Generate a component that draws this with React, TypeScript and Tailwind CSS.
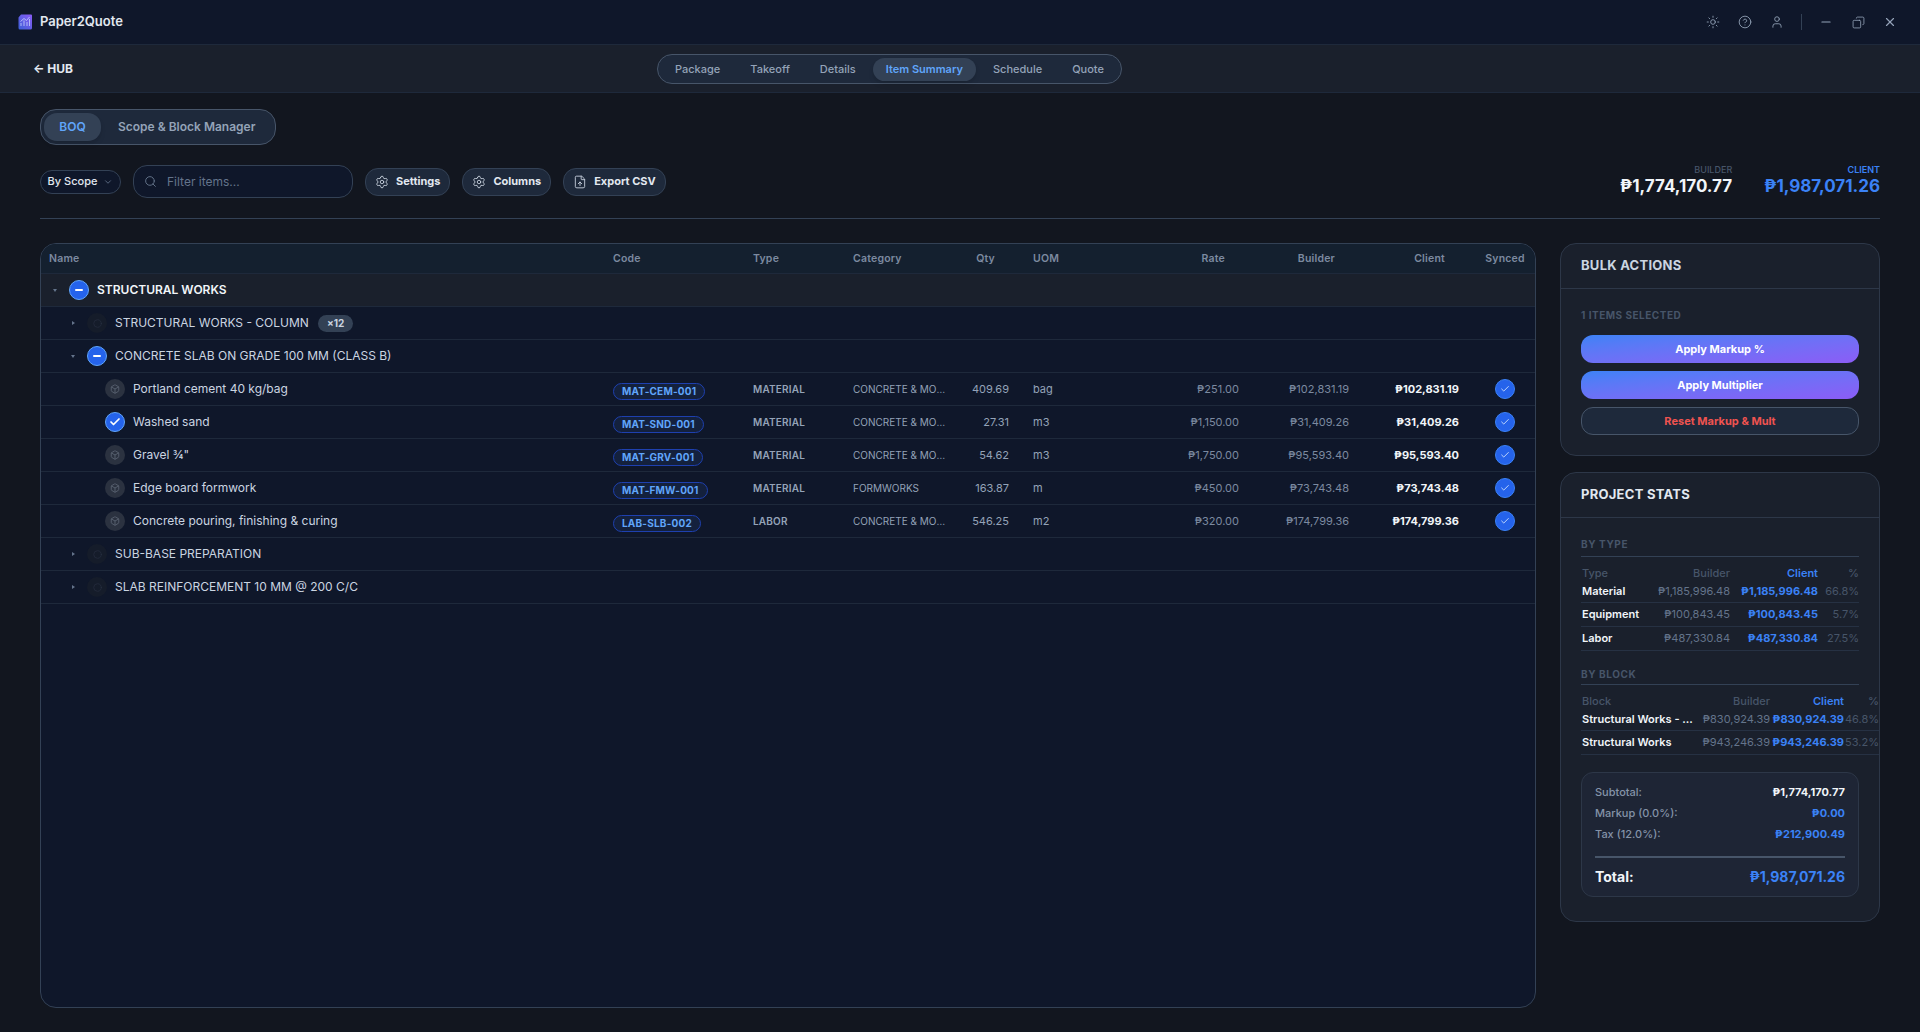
import { Box, Check, ChevronDown, Circle, Copy, FileUp, HelpCircle, Minus, Search, Settings, Sun, User, X } from 'lucide-react'

const tabs = ['Package', 'Takeoff', 'Details', 'Item Summary', 'Schedule', 'Quote']

const gridCols = 'grid grid-cols-[564px_140px_100px_110px_62px_113px_117px_110px_110px_68px]'

const items = [
  { name: 'Portland cement 40 kg/bag', code: 'MAT-CEM-001', type: 'MATERIAL', category: 'CONCRETE & MORTAR', qty: '409.69', uom: 'bag', rate: '₱251.00', amount: '₱102,831.19', selected: false },
  { name: 'Washed sand', code: 'MAT-SND-001', type: 'MATERIAL', category: 'CONCRETE & MORTAR', qty: '27.31', uom: 'm3', rate: '₱1,150.00', amount: '₱31,409.26', selected: true },
  { name: 'Gravel ¾"', code: 'MAT-GRV-001', type: 'MATERIAL', category: 'CONCRETE & MORTAR', qty: '54.62', uom: 'm3', rate: '₱1,750.00', amount: '₱95,593.40', selected: false },
  { name: 'Edge board formwork', code: 'MAT-FMW-001', type: 'MATERIAL', category: 'FORMWORKS', qty: '163.87', uom: 'm', rate: '₱450.00', amount: '₱73,743.48', selected: false },
  { name: 'Concrete pouring, finishing & curing', code: 'LAB-SLB-002', type: 'LABOR', category: 'CONCRETE & MORTAR', qty: '546.25', uom: 'm2', rate: '₱320.00', amount: '₱174,799.36', selected: false },
]

const byType = [
  { name: 'Material', builder: '₱1,185,996.48', client: '₱1,185,996.48', pct: '66.8%' },
  { name: 'Equipment', builder: '₱100,843.45', client: '₱100,843.45', pct: '5.7%' },
  { name: 'Labor', builder: '₱487,330.84', client: '₱487,330.84', pct: '27.5%' },
]

const byBlock = [
  { name: 'Structural Works - Column', builder: '₱830,924.39', client: '₱830,924.39', pct: '46.8%' },
  { name: 'Structural Works', builder: '₱943,246.39', client: '₱943,246.39', pct: '53.2%' },
]

const Logo = () => (
  <svg width="14" height="16" viewBox="0 0 14 16" className="shrink-0">
    <defs>
      <linearGradient id="logoFill" x1="1" y1="0" x2="0" y2="1">
        <stop offset="0" stopColor="#8b5cf6" />
        <stop offset="1" stopColor="#3b5fd6" />
      </linearGradient>
    </defs>
    <path d="M3 0.5H13a1 1 0 0 1 1 1V14a1.5 1.5 0 0 1-1.5 1.5H2A1.5 1.5 0 0 1 0.5 14V3.5Z" fill="url(#logoFill)" />
    <path d="M3 12V9M6 12V6.5M9 12V8M11.5 12V5M2.5 7.5L6 4.5L8.5 6.5L11.5 3" stroke="#c7d2fe" strokeWidth="1" fill="none" opacity="0.8" />
  </svg>
)

const Toggle = ({ state, dim }: { state: 'minus' | 'check' | 'group' | 'item'; dim?: boolean }) => {
  if (state === 'minus') {
    return (
      <span className="w-5 h-5 rounded-full bg-[#2563eb] border border-[#60a5fa] flex items-center justify-center shrink-0">
        <span className="w-2 h-[2px] rounded bg-white" />
      </span>
    )
  }
  if (state === 'check') {
    return (
      <span className="w-5 h-5 rounded-full bg-[#2563eb] border border-[#60a5fa] flex items-center justify-center shrink-0">
        <Check size={12} strokeWidth={3.5} className="text-white" />
      </span>
    )
  }
  if (state === 'group') {
    return (
      <span className="w-5 h-5 rounded-full bg-[#151c2a] flex items-center justify-center shrink-0">
        <Circle size={9} strokeWidth={1.5} className="text-[#2b3445]" />
      </span>
    )
  }
  return (
    <span className={`w-5 h-5 rounded-full bg-[#2b3240] flex items-center justify-center shrink-0 ${dim ? 'opacity-80' : ''}`}>
      <Box size={10} strokeWidth={2} className="text-[#5d6675]" />
    </span>
  )
}

const GroupRow = ({
  level,
  open,
  state,
  title,
  bold,
  tag,
}: {
  level: 0 | 1
  open: boolean
  state: 'minus' | 'group'
  title: string
  bold?: boolean
  tag?: string
}) => (
  <div className={`h-[33px] flex items-center border-b border-[#1e293b] pl-2 ${bold ? 'bg-[#1a202c]' : ''}`}>
    <div className={`flex items-center gap-2 ${level === 1 ? 'pl-[18px]' : ''}`}>
      <span className="w-3 flex justify-center">
        <span
          className={
            open
              ? 'w-0 h-0 border-x-[2.5px] border-x-transparent border-t-[3.5px] border-t-[#64748b]'
              : 'w-0 h-0 border-y-[2.5px] border-y-transparent border-l-[3.5px] border-l-[#64748b]'
          }
        />
      </span>
      <Toggle state={state} />
      <span className={`text-[12px] ${bold ? 'font-semibold text-[#f1f5f9]' : 'text-[#cbd5e1]'}`}>{title}</span>
      {tag && (
        <span className="h-[17px] ml-[1px] px-[9px] rounded-full bg-[#334155] text-[10px] font-bold text-[#cbd5e1] flex items-center">
          {tag}
        </span>
      )}
    </div>
  </div>
)

const ItemRow = ({ item }: { item: (typeof items)[number] }) => (
  <div className={`${gridCols} h-[33px] items-center border-b border-[#1e293b]`}>
    <div className="flex items-center gap-2 pl-[64px]">
      <Toggle state={item.selected ? 'check' : 'item'} />
      <span className="text-[12px] text-[#cbd5e1]">{item.name}</span>
    </div>
    <div className="px-2">
      <span className="inline-flex items-center h-[17px] px-2 rounded-full border border-[#1e40af] bg-[#14213d] text-[10px] font-bold tracking-[0.02em] text-[#60a5fa]">
        {item.code}
      </span>
    </div>
    <div className="px-2 text-[10px] font-semibold text-[#94a3b8] tracking-[0.02em]">{item.type}</div>
    <div className="px-2 text-[10px] text-[#94a3b8] truncate">{item.category}</div>
    <div className="pr-2 text-right text-[11px] text-[#94a3b8]">{item.qty}</div>
    <div className="pl-4 text-[11px] text-[#94a3b8]">{item.uom}</div>
    <div className="pr-2 text-right text-[11px] text-[#7c8aa0]">{item.rate}</div>
    <div className="pr-2 text-right text-[11px] text-[#7c8aa0]">{item.amount}</div>
    <div className="pr-2 text-right text-[11px] font-bold text-[#f1f5f9]">{item.amount}</div>
    <div className="flex justify-center pl-2">
      <span className="w-5 h-5 rounded-full bg-[#2563eb] border border-[#3b82f6] flex items-center justify-center">
        <Check size={10} strokeWidth={2} className="text-[#dbeafe]" />
      </span>
    </div>
  </div>
)

const StatRows = ({
  cols,
  head,
  rows,
}: {
  cols: string
  head: string
  rows: typeof byType
}) => (
  <div className={head === 'Block' ? 'w-[298px]' : 'w-[278px]'}>
    <div className={`${cols} h-[19px] items-center text-[11px] font-medium pl-[1px]`}>
      <span className="text-[#475569]">{head}</span>
      <span className="text-right pr-[1px] text-[#475569]">Builder</span>
      <span className="text-right pr-[1px] text-[#3b82f6] font-semibold">Client</span>
      <span className="text-right pr-[1px] text-[#475569]">%</span>
    </div>
    {rows.map((r, i) => (
      <div
        key={r.name}
        className={`${cols} ${i === 0 ? 'h-[20px] pb-[3px]' : 'h-[24px]'} items-center text-[11px] border-b border-[#263143] pl-[1px]`}
      >
        <span className="font-semibold text-[#f1f5f9] truncate pr-[3px]">{r.name}</span>
        <span className="text-right pr-[1px] text-[#64748b] whitespace-nowrap">{r.builder}</span>
        <span className="text-right pr-[1px] font-bold text-[#3b82f6] whitespace-nowrap">{r.client}</span>
        <span className="text-right pr-[1px] text-[#475569] whitespace-nowrap">{r.pct}</span>
      </div>
    ))}
  </div>
)

const Summary = ({ label, value, blue }: { label: string; value: string; blue?: boolean }) => (
  <div className="flex items-center justify-between h-[21px] text-[11px]">
    <span className="font-medium text-[#8493a8]">{label}</span>
    <span className={`font-bold ${blue ? 'text-[#3b82f6]' : 'text-[#f1f5f9]'}`}>{value}</span>
  </div>
)

const ToolButton = ({ icon, label }: { icon: React.ReactNode; label: string }) => (
  <button className="h-7 px-[9px] flex items-center gap-[7px] rounded-[13px] border border-[#334155] bg-[#1e293b] text-[11px] font-bold text-[#e2e8f0]">
    {icon}
    {label}
  </button>
)

export default function App() {
  return (
    <div className="w-[1920px] h-[1032px] overflow-hidden bg-[#12161f] flex flex-col font-['Inter',sans-serif]">
      {/* title bar */}
      <header className="h-[45px] shrink-0 flex items-center bg-[#0f172a] border-b border-[#1e293b] pl-[18px]">
        <Logo />
        <span className="ml-2 text-[13px] font-semibold text-[#e2e8f0]">Paper2Quote</span>
        <div className="ml-auto flex items-center text-[#94a3b8]">
          <div className="w-8 flex justify-center"><Sun size={14} strokeWidth={1.5} /></div>
          <div className="w-8 flex justify-center"><HelpCircle size={14} strokeWidth={1.5} /></div>
          <div className="w-8 flex justify-center"><User size={14} strokeWidth={1.5} /></div>
          <div className="w-px h-4 bg-[#334155] ml-2 mr-2" />
          <div className="w-8 flex justify-center"><Minus size={14} strokeWidth={2} /></div>
          <div className="w-8 flex justify-center"><Copy size={13} strokeWidth={1.5} className="-scale-x-100" /></div>
          <div className="w-8 flex justify-center"><X size={14} strokeWidth={2} /></div>
          <div className="w-[14px]" />
        </div>
      </header>

      {/* sub nav */}
      <nav className="h-[48px] shrink-0 flex items-center justify-between bg-[#1a202c] border-b border-[#1e293b] px-[33px] relative">
        <span className="text-[12px] font-bold text-[#e2e8f0]">← HUB</span>
        <div className="absolute left-[657px] top-[9px] h-[30px] flex items-center gap-1 px-[4px] rounded-full border border-[#475569] bg-[#1e293b]">
          {tabs.map(t => (
            <span
              key={t}
              className={
                t === 'Item Summary'
                  ? 'h-[23px] px-[13px] flex items-center rounded-full bg-[#334155] text-[11px] font-semibold text-[#60a5fa] shadow-md'
                  : 'h-[23px] px-[13px] flex items-center text-[11px] font-medium text-[#94a3b8]'
              }
            >
              {t}
            </span>
          ))}
        </div>
      </nav>

      <main className="flex-1 min-h-0 flex flex-col px-10 pt-4 pb-6">
        {/* view switch */}
        <div className="self-start h-9 flex items-center p-[3px] rounded-[16px] border border-[#475569] bg-[#1e293b]">
          <span className="h-full w-[57px] flex items-center justify-center rounded-[13px] bg-[#334155] text-[12px] font-semibold text-[#60a5fa] shadow-md">
            BOQ
          </span>
          <span className="px-[17px] text-[12px] font-semibold text-[#94a3b8]">Scope &amp; Block Manager</span>
        </div>

        {/* toolbar */}
        <div className="mt-5 h-[34px] flex items-center pb-[1px]">
          <button className="h-6 w-[81px] flex items-center justify-center gap-[6px] rounded-xl border border-[#334155] bg-[#0f172a] text-[11px] font-medium text-[#e2e8f0]">
            By Scope
            <ChevronDown size={10} className="text-[#64748b]" />
          </button>
          <div className="ml-3 h-[33px] w-[220px] flex items-center gap-[10px] pl-[10px] rounded-[14px] border border-[#334155] bg-[#0f172a] text-[12px] text-[#64748b]">
            <Search size={13} strokeWidth={1.75} className="text-[#64748b]" />
            Filter items...
          </div>
          <div className="ml-3 flex items-center gap-3">
            <ToolButton icon={<Settings size={14} strokeWidth={1.5} className="text-[#cbd5e1]" />} label="Settings" />
            <ToolButton icon={<Settings size={14} strokeWidth={1.5} className="text-[#cbd5e1]" />} label="Columns" />
            <ToolButton icon={<FileUp size={14} strokeWidth={1.5} className="text-[#cbd5e1]" />} label="Export CSV" />
          </div>
          <div className="ml-auto flex gap-8 -mt-[2px]">
            <div className="flex flex-col items-end">
              <span className="text-[9px] leading-[12px] font-medium text-[#475569]">BUILDER</span>
              <span className="text-[17px] leading-[21px] font-bold text-[#f1f5f9]">₱1,774,170.77</span>
            </div>
            <div className="flex flex-col items-end">
              <span className="text-[9px] leading-[12px] font-semibold text-[#3b82f6]">CLIENT</span>
              <span className="text-[17px] leading-[21px] font-bold text-[#3b82f6]">₱1,987,071.26</span>
            </div>
          </div>
        </div>

        <div className="mt-[19px] h-px shrink-0 bg-[#334155]" />

        <div className="mt-6 flex-1 min-h-0 flex gap-6">
          {/* table */}
          <section className="w-[1496px] h-[765px] rounded-2xl border border-[#334155] bg-[#0f172a] overflow-hidden">
            <div className={`${gridCols} h-[30px] items-center bg-[#14202f] border-b border-[#1e293b] text-[10.5px] font-semibold tracking-[0.02em] text-[#7c8aa0]`}>
              <div className="pl-2">Name</div>
              <div className="px-2">Code</div>
              <div className="px-2">Type</div>
              <div className="px-2">Category</div>
              <div className="pr-[22px] text-right">Qty</div>
              <div className="pl-4">UOM</div>
              <div className="pr-[22px] text-right">Rate</div>
              <div className="pr-[22px] text-right">Builder</div>
              <div className="pr-[22px] text-right">Client</div>
              <div className="flex justify-center pl-2">Synced</div>
            </div>
            <GroupRow level={0} open state="minus" title="STRUCTURAL WORKS" bold />
            <GroupRow level={1} open={false} state="group" title="STRUCTURAL WORKS - COLUMN" tag="×12" />
            <GroupRow level={1} open state="minus" title="CONCRETE SLAB ON GRADE 100 MM (CLASS B)" />
            {items.map(item => (
              <ItemRow key={item.code} item={item} />
            ))}
            <GroupRow level={1} open={false} state="group" title="SUB-BASE PREPARATION" />
            <GroupRow level={1} open={false} state="group" title="SLAB REINFORCEMENT 10 MM @ 200 C/C" />
          </section>

          {/* side panels */}
          <aside className="w-[320px] shrink-0 flex flex-col gap-4">
            <div className="h-[213px] rounded-2xl border border-[#2d3748] bg-[#1a202c]">
              <div className="h-[45px] flex items-center px-5 border-b border-[#2d3748] text-[13px] font-bold tracking-[0.02em] text-[#cbd5e1]">
                BULK ACTIONS
              </div>
              <div className="px-5 pt-5">
                <div className="h-3 flex items-center text-[10px] font-bold tracking-[0.05em] text-[#475569]">1 ITEMS SELECTED</div>
                <div className="mt-[14px] flex flex-col gap-2">
                  <button className="h-7 rounded-xl bg-linear-to-br from-[#3b82f6] to-[#8b5cf6] text-[11px] font-bold text-white">Apply Markup %</button>
                  <button className="h-7 rounded-xl bg-linear-to-br from-[#3b82f6] to-[#8b5cf6] text-[11px] font-bold text-white">Apply Multiplier</button>
                  <button className="h-7 rounded-xl border border-[#475569] bg-[#1e293b] text-[11px] font-bold text-[#ef5350]">Reset Markup &amp; Mult</button>
                </div>
              </div>
            </div>

            <div className="h-[450px] rounded-2xl border border-[#2d3748] bg-[#1a202c]">
              <div className="h-[45px] flex items-center px-5 border-b border-[#2d3748] text-[13px] font-bold tracking-[0.02em] text-[#e2e8f0]">
                PROJECT STATS
              </div>
              <div className="px-5 pt-[20px]">
                <div className="h-[19px] border-b border-[#334155] text-[10px] leading-[12px] font-bold tracking-[0.06em] text-[#475569]">BY TYPE</div>
                <div className="mt-[7px]">
                  <StatRows cols="grid grid-cols-[69px_80px_88px_41px]" head="Type" rows={byType} />
                </div>
                <div className="mt-[17px] h-[17px] border-b border-[#334155] text-[10px] leading-[12px] font-bold tracking-[0.06em] text-[#475569]">BY BLOCK</div>
                <div className="mt-[7px]">
                  <StatRows cols="grid grid-cols-[118px_71px_74px_35px]" head="Block" rows={byBlock} />
                </div>
                <div className="mt-[17px] h-[125px] rounded-xl border border-[#2d3748] bg-[#1e2535] px-[13px] pt-[9px]">
                  <Summary label="Subtotal:" value="₱1,774,170.77" />
                  <Summary label="Markup (0.0%):" value="₱0.00" blue />
                  <Summary label="Tax (12.0%):" value="₱212,900.49" blue />
                  <div className="mt-[11px] h-[2px] bg-[#475569]" />
                  <div className="mt-[8px] flex items-center justify-between">
                    <span className="text-[14px] font-bold text-[#f1f5f9]">Total:</span>
                    <span className="text-[14px] font-bold text-[#3b82f6]">₱1,987,071.26</span>
                  </div>
                </div>
              </div>
            </div>
          </aside>
        </div>
      </main>
    </div>
  )
}
